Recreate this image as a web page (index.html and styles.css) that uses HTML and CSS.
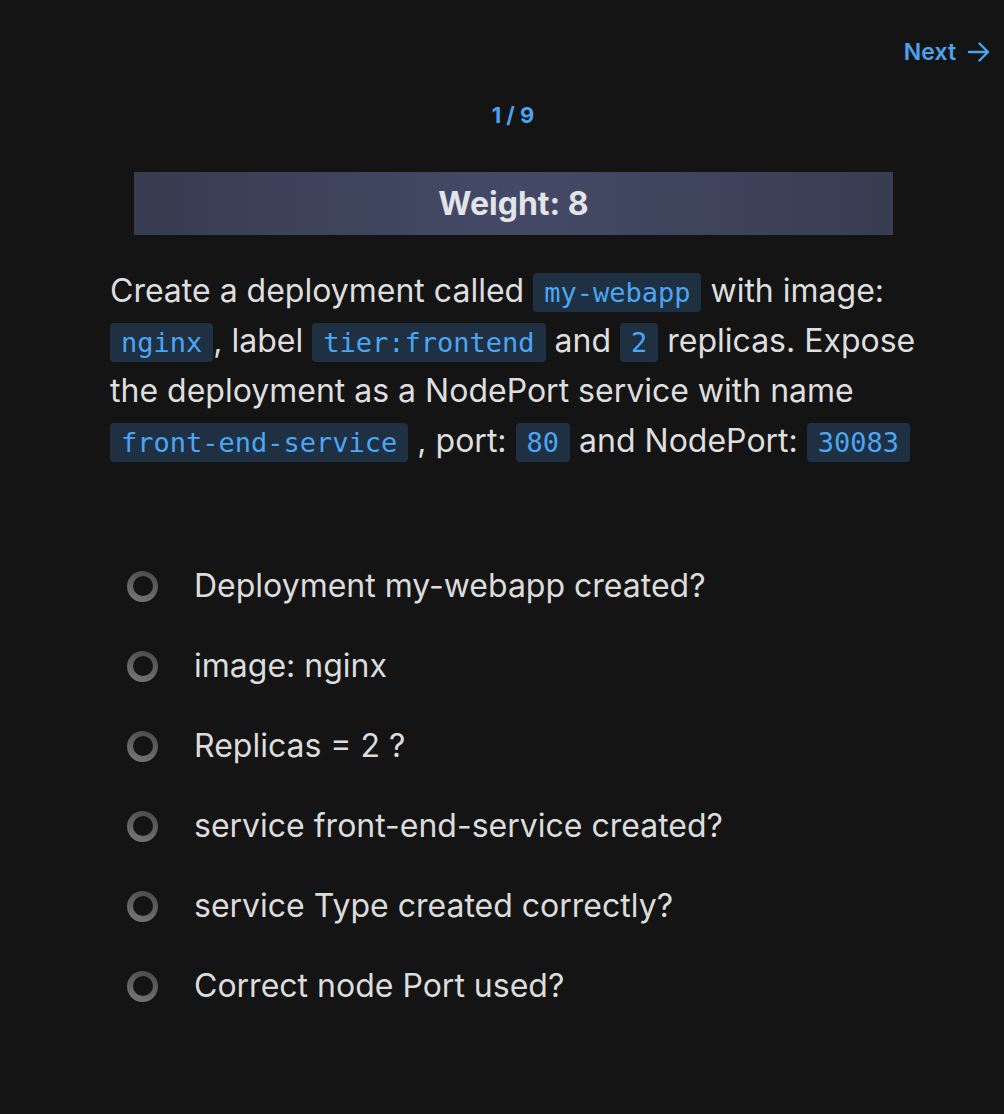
FILE: index.html
```html
<!DOCTYPE html>
<html>
<head>
<meta charset="utf-8">
<link rel="stylesheet" href="styles.css">
</head>
<body>
<div class="page">
  <div class="topbar">
    <a class="next">Next
      <svg class="arrow" width="26" height="24" viewBox="0 0 26 24" fill="none" stroke="currentColor" stroke-width="2.4" stroke-linecap="round" stroke-linejoin="round"><path d="M3 12h19M13.5 3.5L22 12l-8.5 8.5"/></svg>
    </a>
  </div>
  <main class="col">
    <div class="counter">1 / 9</div>
    <div class="weight">Weight: 8</div>
    <p class="task">Create a deployment called <code>my-webapp</code> with image: <code>nginx</code>, label <code>tier:frontend</code> and <code>2</code> replicas. Expose the deployment as a NodePort service with name <code>front-end-service</code> , port: <code>80</code> and NodePort: <code>30083</code></p>
    <ul class="checks">
      <li><span class="ring"></span><span>Deployment my-webapp created?</span></li>
      <li><span class="ring"></span><span>image: nginx</span></li>
      <li><span class="ring"></span><span>Replicas = 2 ?</span></li>
      <li><span class="ring"></span><span>service front-end-service created?</span></li>
      <li><span class="ring"></span><span>service Type created correctly?</span></li>
      <li><span class="ring"></span><span>Correct node Port used?</span></li>
    </ul>
  </main>
</div>
</body>
</html>
```
FILE: styles.css
```css
html, body {
  margin: 0;
  padding: 0;
  background: #141414;
}
.page {
  width: 1004px;
  height: 1114px;
  font-family: Inter, "Noto Sans", sans-serif;
  color: #dcdcdc;
}
.topbar {
  display: flex;
  justify-content: flex-end;
  padding: 37px 12px 0 0;
  height: 30px;
}
.next {
  display: flex;
  align-items: center;
  gap: 10px;
  color: #4ba3ef;
  font-weight: 600;
  font-size: 23px;
  line-height: 30px;
}
.arrow {
  display: block;
}
.col {
  margin-left: 110px;
  width: 806px;
  display: flex;
  flex-direction: column;
}
.counter {
  margin-top: 33px;
  text-align: center;
  color: #4ba3ef;
  font-weight: 700;
  font-size: 22px;
  line-height: 30px;
}
.weight {
  margin: 42px 23px 0 24px;
  height: 63px;
  display: flex;
  align-items: center;
  justify-content: center;
  background: linear-gradient(90deg, #383c51 0%, #444a66 50%, #393d52 100%);
  color: #e3e3ea;
  font-weight: 700;
  font-size: 32px;
}
.task {
  margin: 31px 0 0 0;
  font-size: 32px;
  line-height: 50px;
  color: #dedede;
}
code {
  font-family: "DejaVu Sans Mono", monospace;
  font-size: 27px;
  line-height: 1;
  white-space: nowrap;
  color: #4ba6f3;
  background: #1f3043;
  border-radius: 4px;
  padding: 4px 11px;
}
.checks {
  list-style: none;
  margin: 100px 0 0 17px;
  padding: 0;
  display: flex;
  flex-direction: column;
  gap: 40px;
}
.checks li {
  display: flex;
  align-items: center;
  gap: 36px;
  font-size: 32px;
  line-height: 40px;
  color: #dcdcdc;
}
.ring {
  width: 31px;
  height: 31px;
  flex: none;
  border-radius: 50%;
  background: linear-gradient(200deg, #474747 0%, #7a7a7a 100%);
  display: flex;
  align-items: center;
  justify-content: center;
}
.ring::after {
  content: "";
  width: 20px;
  height: 20px;
  border-radius: 50%;
  background: #141414;
}
```
